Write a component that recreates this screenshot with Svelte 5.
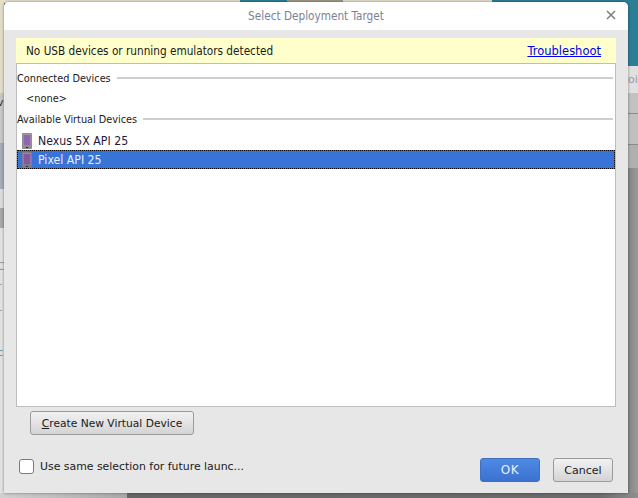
<script>
  const sideMarks = [
    { text: 'v', top: 94, color: '#333' },
    { text: 'l', top: 228, color: '#6f8fb0' },
    { text: 'C', top: 258, color: '#8a9296' },
    { text: 'r', top: 278, color: '#6fa08a' },
    { text: 'r', top: 304, color: '#6fa08a' },
    { text: 'i', top: 324, color: '#6f8fa0' },
    { text: 'c', top: 344, color: '#6f8792' }
  ]

  const groups = [
    { title: 'Connected Devices', empty: '<none>', devices: [] },
    {
      title: 'Available Virtual Devices',
      devices: [
        { name: 'Nexus 5X API 25', selected: false },
        { name: 'Pixel API 25', selected: true }
      ]
    }
  ]
</script>

<div class="desktop">
  <div class="strip-top">
    <div class="top-tan"></div>
    <div class="top-teal"></div>
    <div class="top-taupe"></div>
    <div class="top-light"></div>
  </div>
  <div class="strip-left">
    <div class="left-a"></div>
    <div class="left-b"></div>
    <div class="left-c"></div>
    <div class="left-d"></div>
    {#each sideMarks as mark}
      <span class="mark" style={`top:${mark.top}px;color:${mark.color}`}>{mark.text}</span>
    {/each}
  </div>
  <div class="strip-right">
    <div class="right-tab"><span>oi</span></div>
    <div class="right-a"></div>
    <div class="right-b"></div>
    <div class="right-c"></div>
    <div class="right-d"></div>
  </div>
  <div class="strip-bottom"></div>

  <div class="dialog">
    <header class="title">
      <span>Select Deployment Target</span>
      <svg class="close" width="10" height="10" viewBox="0 0 10 10">
        <path d="M1 1l8 8M9 1l-8 8" stroke="#808080" stroke-width="1.6" fill="none" />
      </svg>
    </header>

    <div class="body">
      <div class="notice">
        <span>No USB devices or running emulators detected</span>
        <a href="#troubleshoot">Troubleshoot</a>
      </div>

      <div class="list">
        {#each groups as group}
          <div class="group">
            <span>{group.title}</span>
            <i></i>
          </div>
          {#if group.empty}
            <div class="none">{group.empty}</div>
          {/if}
          {#each group.devices as device}
            <div class="device" class:selected={device.selected}>
              <svg width="10" height="16" viewBox="0 0 10 16">
                <rect width="10" height="16" rx="1" fill={device.selected ? '#7d7d85' : '#8e8e8e'} />
                <rect x="1" y="1.5" width="8" height="11" fill="#e4e0ea" opacity="0.35" />
                <rect x="1.5" y="2" width="7" height="10.5" fill={device.selected ? '#8557a6' : '#8f66b2'} />
                <rect x="4" y="14" width="2" height="1" fill="#222" />
              </svg>
              <span>{device.name}</span>
            </div>
          {/each}
        {/each}
      </div>

      <div class="create-row">
        <button class="btn create" type="button"><u>C</u>reate New Virtual Device</button>
      </div>

      <div class="footer">
        <label class="check">
          <input type="checkbox" />
          <span>Use same selection for future launc...</span>
        </label>
        <div class="actions">
          <button class="btn ok" type="button">OK</button>
          <button class="btn" type="button">Cancel</button>
        </div>
      </div>
    </div>
  </div>
</div>

<style>
  :global(body) {
    margin: 0;
    overflow: hidden;
  }
  .desktop {
    position: relative;
    width: 638px;
    height: 498px;
    overflow: hidden;
    background: #2a7f96;
    font-family: "DejaVu Sans", sans-serif;
    font-size: 11px;
    color: #1a1a1a;
  }
  .strip-top {
    position: absolute;
    left: 0;
    top: 0;
    width: 492px;
    height: 3px;
    display: flex;
  }
  .top-tan {
    width: 240px;
    background: #e6e1cc;
  }
  .top-teal {
    width: 47px;
    background: #2a7f96;
  }
  .top-taupe {
    width: 56px;
    background: #a09a8a;
  }
  .top-light {
    flex: 1;
    background: #e6e1cc;
  }
  .strip-left {
    position: absolute;
    left: 0;
    top: 2px;
    width: 4px;
    height: 496px;
    overflow: hidden;
    background: #e2ddc8;
  }
  .left-a,
  .left-b,
  .left-c,
  .left-d {
    position: absolute;
    left: 0;
    width: 4px;
  }
  .left-a {
    top: 91px;
    height: 50px;
    background: #c8c8c8;
  }
  .left-b {
    top: 141px;
    height: 46px;
    background: #a6adba;
  }
  .left-c {
    top: 187px;
    height: 19px;
    background: #dcdcdc;
  }
  .left-d {
    top: 206px;
    height: 290px;
    background: linear-gradient(#a8a8a8 0 20px, #e2e2e2 20px);
  }
  .mark {
    position: absolute;
    left: -3px;
  }
  .strip-right {
    position: absolute;
    right: 0;
    top: 66px;
    width: 10px;
    height: 432px;
  }
  .right-tab {
    height: 27px;
    overflow: hidden;
    background: #e0e0e0;
    color: #9a9aa6;
    line-height: 28px;
    white-space: nowrap;
  }
  .right-a {
    height: 20px;
    background: #c2c2c2;
    border-bottom: 1px solid #8a8a8a;
  }
  .right-b {
    height: 30px;
    background: #c0c0c0;
    border-bottom: 1px solid #8a8a8a;
  }
  .right-c {
    height: 23px;
    background: #b0b0b0;
  }
  .right-d {
    height: 330px;
    background: linear-gradient(90deg, #858585, #9a9a9a);
  }
  .strip-bottom {
    position: absolute;
    left: 0;
    right: 0;
    bottom: 0;
    height: 5px;
    background: linear-gradient(90deg, #d0d0d0 0, #a8a8a8 127px, #666 127px, #6c6c6c 600px, #8f8f8f 100%);
  }
  .dialog {
    position: absolute;
    left: 4px;
    top: 2px;
    width: 624px;
    height: 491px;
    display: flex;
    flex-direction: column;
    border-radius: 5px 5px 0 0;
    background: #e7e7e7;
    box-shadow: 0 0 3px rgba(0, 0, 0, 0.45);
  }
  .title {
    flex: none;
    position: relative;
    height: 28px;
    display: flex;
    align-items: center;
    justify-content: center;
    background: #ffffff;
    border-radius: 5px 5px 0 0;
    color: #7a8296;
    font-family: "DejaVu Sans Condensed", "DejaVu Sans", sans-serif;
    font-size: 11.7px;
  }
  .close {
    position: absolute;
    right: 12px;
    top: 8px;
  }
  .body {
    flex: 1;
    display: flex;
    flex-direction: column;
    padding: 8px 12px 0;
    min-height: 0;
  }
  .notice {
    flex: none;
    height: 25px;
    display: flex;
    align-items: center;
    justify-content: space-between;
    padding: 0 15px 0 10px;
    background: #ffffcc;
    font-family: "DejaVu Sans Condensed", "DejaVu Sans", sans-serif;
    font-size: 11.7px;
  }
  .notice a {
    color: #0000ee;
    font-family: "DejaVu Sans", sans-serif;
    font-size: 11.5px;
    text-decoration: underline;
  }
  .list {
    flex: none;
    height: 344px;
    box-sizing: border-box;
    padding: 4px 0 0;
    background: #ffffff;
    border: 1px solid #bdbdbd;
    font-family: "DejaVu Sans Condensed", "DejaVu Sans", sans-serif;
  }
  .group {
    height: 20px;
    display: flex;
    align-items: center;
    gap: 6px;
    padding-right: 2px;
    font-size: 10.8px;
  }
  .group i {
    flex: 1;
    height: 2px;
    background: #cfcfcf;
  }
  .none {
    height: 21px;
    line-height: 21px;
    padding-left: 9px;
    font-size: 10.9px;
  }
  .device {
    height: 19px;
    display: flex;
    align-items: center;
    gap: 6px;
    padding-left: 5px;
    font-size: 12.2px;
    color: #1a1a3a;
  }
  .group + .device {
    margin-top: 2px;
  }
  .device.selected {
    box-sizing: border-box;
    background: #3874d8;
    outline: 1px dotted #000;
    outline-offset: -1px;
    color: #e8eeff;
  }
  .create-row {
    flex: none;
    padding: 4px 0 0 14px;
  }
  .btn {
    height: 24px;
    box-sizing: border-box;
    padding: 0 4px;
    border: 1px solid #9a9a9a;
    border-radius: 3px;
    background: linear-gradient(#f2f2f2, #d4d4d4);
    font: inherit;
    color: #1a1a1a;
    white-space: nowrap;
  }
  .create {
    width: 164px;
    font-size: 10.7px;
  }
  .footer {
    flex: 1;
    display: flex;
    justify-content: space-between;
    padding: 23px 3px 0 3px;
  }
  .check {
    display: flex;
    align-items: center;
    gap: 6px;
    height: 16px;
    font-size: 10.9px;
  }
  .check input {
    appearance: none;
    width: 15px;
    height: 15px;
    margin: 0;
    border: 1px solid #7a7a7a;
    border-radius: 3px;
    background: #ffffff;
  }
  .actions {
    display: flex;
    gap: 13px;
  }
  .actions .btn {
    width: 60px;
    padding: 0;
  }
  .actions .ok {
    border-color: #3f6fbf;
    background: linear-gradient(#4f8ae4, #3b72d0);
    color: #e8f0ff;
    font-size: 12px;
    letter-spacing: 0.5px;
  }
</style>
